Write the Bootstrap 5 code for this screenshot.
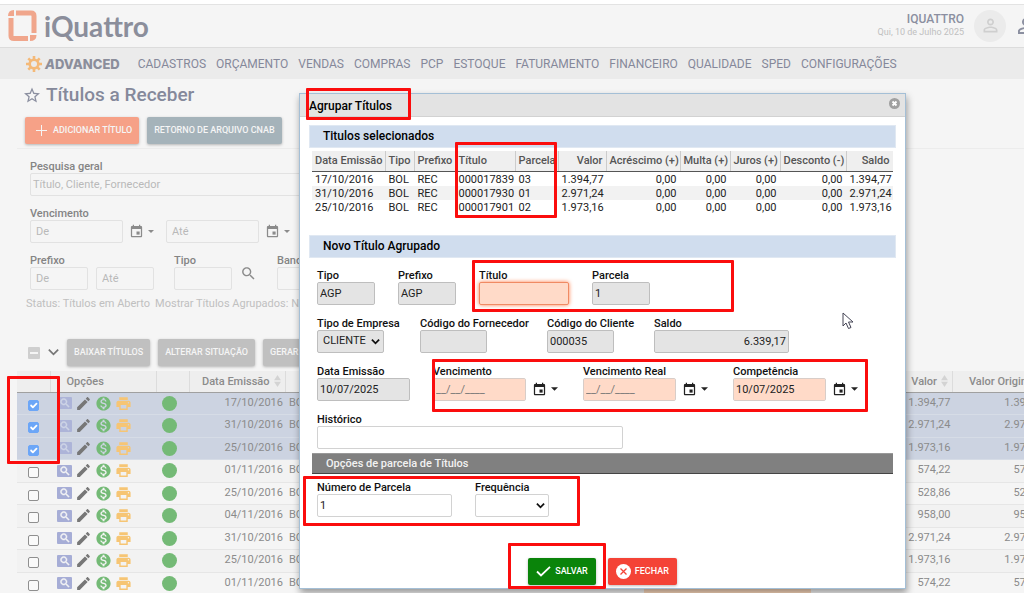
<!DOCTYPE html>
<html lang="pt-BR">
<head>
<meta charset="utf-8">
<meta name="viewport" content="width=device-width, initial-scale=1">
<title>iQuattro - Títulos a Receber</title>
<link href="https://cdn.jsdelivr.net/npm/bootstrap@5.3.0/dist/css/bootstrap.min.css" rel="stylesheet">
<style>
  body { font-family: Roboto, "Liberation Sans", sans-serif; font-size: 11px; line-height: 13px; color: #8b8b8b; background: #f5f5f5; }
  svg { fill: currentColor; flex: none; display: block; }
  input::placeholder { color: #b9b9b9 !important; opacity: 1; }

  /* header and menu */
  .topbar { height: 48px; border-top: 4px solid #fff; border-bottom: 1px solid #dcdcdc; box-shadow: inset 0 1px #e3e3e3; padding-left: 8px; margin-right: -14px; }
  .brand-name { font: 700 28px/32px Lato, sans-serif; color: #8b8e9b; margin-left: 7px; }
  .user-name { font-size: 12px; font-weight: 500; color: #8b8fa0; }
  .user-date { font-size: 9px; line-height: 12px; color: #c0c0c0; }
  .avatar { width: 32px; height: 32px; background: #ebebeb; color: #cfcfcf; margin: 0 8px 0 10px; }
  .menubar { height: 31px; background: #ebebeb; padding: 1px 0 0 26px; }
  .menu-links { gap: 10px; }
  .menubar a { color: #85889a; font-size: 12px; white-space: nowrap; }
  .edition { font: 800 13px/18px Inter, sans-serif; color: #8b8e9b; margin: 0 18px 0 3px; }

  /* page contents */
  .title-line { padding: 4px 0 0 24px; }
  .page-title { font-size: 19px; line-height: 24px; font-weight: 500; color: #85899b; margin-left: 6px; }
  .actions { padding: 10px 0 0 25px; }
  .act { border: 0; border-radius: 2px; height: 27px; padding: 0 7px; font-size: 9px; line-height: 13px; font-weight: 500; color: #f5f5f5; box-shadow: 0 1px 3px #00000044; white-space: nowrap; }
  .act:hover { color: #fff; }
  .act-new { background: #f6a187; padding-left: 11px; gap: 6px; } .act-file { background: #a5b3ba; } .act-off { background: #c0c0c0; }
  .act-save, .act-save:hover { background: #0a840a; color: #fff; } .act-close, .act-close:hover { background: #f44336; color: #fff; }
  .filters { border-top: 1px solid #ececec; margin: 4px 0 0 17px; padding: 11px 0 0 13px; }
  .filter-row { margin-top: 11px; }
  .field label { display: block; font-weight: 500; white-space: nowrap; height: 13px; }
  .filters label { color: #848484; }
  .field .form-control, .field .form-select { height: 23px; min-height: 0; padding: 0 5px; font-size: 11px; line-height: 20px; border: 1px solid #e2e2e2; border-radius: 2px; background-color: #f5f5f5; color: #8b8b8b; box-shadow: none; }
  .field .wide { max-width: 600px; padding-left: 2px; }
  .w58 { width: 58px !important; } .w67 { width: 67px !important; } .w74 { width: 74px !important; } .w90 { width: 90px !important; }
  .w93 { width: 93px !important; } .w135 { width: 135px !important; } .w306 { width: 306px !important; }
  .f80 { width: 80px; } .f84 { width: 84px; } .f104 { width: 104px; } .f127 { width: 127px; }
  .gap-date { column-gap: 6px; }
  .cal-btn { margin-right: 6px; }
  .icon-btn { border: 0; background: none; padding: 0; color: inherit; }
  .status { color: #c0c0c0; margin: 7px 0 0 26px; white-space: nowrap; gap: 5px; }

  /* title list */
  .bulk { margin: 29px 0 5px 28px; }
  .minus { width: 12px; height: 12px; background: #cfcfcf; border-radius: 1px; }
  .list-wrap { margin: 0 -31px 0 17px; }
  .titles { table-layout: fixed; width: 100%; border-collapse: collapse; }
  .titles th { height: 21px; font-weight: 500; background: #eee; border-bottom: 1px solid #a0a0a0; border-right: 1px solid #dcdcdc; padding: 0 4px; white-space: nowrap; }
  .titles td { height: 22px; border-bottom: 1px solid #e6e6e6; padding: 0 2px 2px 4px; white-space: nowrap; overflow: hidden; }
  .titles td.tools { padding: 0 3px; }
  .titles tr:nth-child(even) td { height: 23px; background: #f2f2f2; }
  .titles tr.picked td { background: #ccd3e1; border-color: #d6dce6; }
  .tools-set { gap: 3px; padding-left: 4px; }
  .titles .form-check-input { width: 11px; height: 11px; margin: 4px 0 0; border: 1px solid #8f8f8f; border-radius: 2px; background-color: #fafafa; display: block; }
  .titles .form-check-input:checked { background-color: #6ca6f7; border-color: #6ca6f7; background-size: 12px 12px; }
  .view { width: 15px; height: 12px; border-radius: 1px; background: #a6add6; color: #f5f5f5; }
  .view svg { stroke: currentColor; stroke-width: 1; }
  .picked .view { color: #d0d6e8; opacity: .8; }
  .dot { width: 15px; height: 15px; background: #74ba76; margin-left: 3px; }
  .notice { width: 167px; height: 4px; left: 644px; bottom: 0; background: #fbd9bd; }

  /* dialog */
  .dlg { left: 299px; top: 93px; width: 607px; background: #fff; border: 1px solid #a4bfd6; color: #222; box-shadow: 1px 4px 7px #00000060; }
  .dlg-head { height: 23px; background: #e3e3e3; border-bottom: 1px solid #d2d2d2; padding: 0 5px 0 9px; }
  .dlg-title { font-size: 12px; line-height: 25px; font-weight: 500; color: #000; }
  .band { margin: 8px 9px 0; height: 23px; padding: 0 13px; background: #d0ddee; border: 1px solid #e0e8f2; font-size: 12px; line-height: 21px; font-weight: 500; color: #000; }
  .band-next { margin-top: 21px; }
  .picks { width: calc(100% - 24px); margin: 3px 12px 0; table-layout: fixed; border-collapse: collapse; }
  .picks th { height: 20px; background: #efefef; font-weight: 500; color: #555; border-bottom: 1px solid #555; border-right: 1px solid #ccc; padding: 0 3px; white-space: nowrap; }
  .picks th:last-child { border-right: 0; }
  .picks td { padding: 1px 3px 0; line-height: 13px; border-right: 1px solid transparent; white-space: nowrap; }
  .picks tr:nth-child(even) td { background: #f2f2f2; }
  .dlg form { padding: 11px 17px 3px; }
  .dlg .form-row { gap: 23px; margin-bottom: 12px; }
  .dlg label { color: #111; }
  .dlg .field .form-control, .dlg .field .form-select { background-color: #fff; border-color: #d2d2d2; color: #222; padding: 0 2px; }
  .dlg .field .form-control:disabled, .dlg .field .form-select:disabled { background-color: #e4e4e4; border-color: #bebebe; opacity: 1; }
  .dlg .field .need { background-color: #ffdac8; border-color: #d8cdc8; }
  .dlg .field .need::placeholder { color: #777 !important; }
  .dlg .field .hot { border-color: #f08a63; box-shadow: 0 0 4px #ff7a45; }
  .dlg .field .form-select { background-image: url("data:image/svg+xml,%3csvg xmlns='http://www.w3.org/2000/svg' viewBox='0 0 10 10'%3e%3cpath d='M1 3l4 4 4-4' fill='none' stroke='%23111' stroke-width='2'/%3e%3c/svg%3e"); background-size: 9px 9px; background-position: right 3px center; padding-left: 5px; }
  .parcels { height: 21px; margin: -8px -5px 7px; padding: 0 14px; background: #808080; border-bottom: 1px solid #444; border-top: 1px solid #999; color: #f2f2f2; font-weight: 500; line-height: 19px; }
  .dlg-actions { gap: 12px; padding-top: 29px; }
  .dlg-actions .act { padding: 0 8px; }

  /* red highlights */
  .hl { position: absolute; border: 3px solid #fb0d0d; border-radius: 1px; pointer-events: none; }
  .hl-rows { left: 7px; top: 376px; width: 53px; height: 88px; }
  .hl-title { left: 6px; top: -6px; width: 105px; height: 32px; }
  .hl-ids { left: 155px; top: 48px; width: 102px; height: 76px; }
  .hl-new { left: 172px; top: 166px; width: 262px; height: 52px; }
  .hl-dates { left: 132px; top: 265px; width: 436px; height: 53px; }
  .hl-parcels { left: 3px; top: 382px; width: 277px; height: 50px; }
  .hl-save { left: 208px; top: 449px; width: 98px; height: 46px; }
  .pointer { left: 542px; top: 218px; }
</style>
</head>
<body>
<svg class="d-none">
  <symbol id="cal" viewBox="0 0 24 24"><path d="M19 3h-1V1h-2v2H8V1H6v2H5c-1.1 0-2 .9-2 2v14c0 1.1.9 2 2 2h14c1.1 0 2-.9 2-2V5c0-1.1-.9-2-2-2zM19 19H5V8h14z"/><path d="M12 12h5v5h-5z"/></symbol>
  <symbol id="pencil" viewBox="0 0 24 24"><path d="M3 17.250V21h3.750L17.810 9.940l-3.750-3.750zM20.710 7.040c.39-.39.39-1.020 0-1.410l-2.340-2.340c-.39-.39-1.020-.39-1.410 0l-1.830 1.830 3.750 3.750z"/></symbol>
  <symbol id="print" viewBox="0 0 24 24"><path d="M19 8H5c-1.660 0-3 1.340-3 3v6h4v4h12v-4h4v-6c0-1.660-1.340-3-3-3zm-3 11H8v-5h8v5zm3-7c-.55 0-1-.45-1-1s.45-1 1-1 1 .45 1 1-.45 1-1 1zm-1-9H6v4h12V3z"/></symbol>
  <symbol id="money" viewBox="0 0 24 24"><path d="M12 2C6.480 2 2 6.480 2 12s4.480 10 10 10 10-4.480 10-10S17.520 2 12 2zm1.410 16.090V20h-2.670v-1.930c-1.710-.36-3.160-1.460-3.270-3.400h1.960c.1 1.050.82 1.870 2.650 1.870 1.960 0 2.400-.98 2.400-1.590 0-.83-.44-1.610-2.670-2.140-2.480-.6-4.180-1.620-4.180-3.670 0-1.720 1.390-2.840 3.110-3.210V4h2.670v1.950c1.860.45 2.790 1.860 2.850 3.390H14.300c-.05-1.110-.64-1.870-2.220-1.870-1.500 0-2.400.68-2.400 1.640 0 .84.65 1.390 2.670 1.910s4.180 1.390 4.180 3.910c-.01 1.830-1.380 2.830-3.120 3.160z"/></symbol>
  <symbol id="search" viewBox="0 0 24 24"><path d="M15.500 14h-.79l-.28-.27C15.410 12.590 16 11.110 16 9.500 16 5.910 13.090 3 9.500 3S3 5.910 3 9.500 5.910 16 9.500 16c1.610 0 3.090-.59 4.230-1.570l.27.28v.79l5 4.990L20.490 19l-4.990-5zm-6 0C7.010 14 5 11.990 5 9.500S7.010 5 9.500 5 14 7.010 14 9.500 11.990 14 9.500 14z"/></symbol>
  <symbol id="person" viewBox="0 0 24 24"><path d="M12 5.900a2.100 2.100 0 1 1 0 4.200 2.100 2.100 0 0 1 0-4.200m0 9c2.970 0 6.100 1.460 6.100 2.100v1.100H5.900V17c0-.64 3.130-2.100 6.100-2.100M12 4C9.790 4 8 5.790 8 8s1.790 4 4 4 4-1.790 4-4-1.790-4-4-4zm0 9c-2.670 0-8 1.340-8 4v3h16v-3c0-2.660-5.330-4-8-4z"/></symbol>
  <symbol id="caret" viewBox="0 0 8 4"><path d="M0 0h8L4 4z"/></symbol>
  <symbol id="sort" viewBox="0 0 8 14"><path fill="#d3d3d3" d="M4 0l4 6H0zM0 8h8l-4 6z"/></symbol>
</svg>

<div class="vh-100 overflow-hidden position-relative">
  <header class="topbar d-flex align-items-center">
    <svg width="29" height="31" viewBox="0 0 29 31"><g fill="none" stroke="#f0a68c" stroke-width="5"><path d="M8 3h15q3 0 3 3v17"/><path d="M3 8v18q0 2.500 3 2.500h14"/></g><path fill="#f0a68c" d="M0 6q0-6 6-6v6zM22 25h6.500q0 6-6.500 6z"/></svg>
    <span class="brand-name">iQuattro</span>
    <div class="ms-auto text-end"><div class="user-name">IQUATTRO</div><div class="user-date">Qui, 10 de Julho 2025</div></div>
    <div class="avatar rounded-circle d-flex align-items-center justify-content-center"><svg width="21" height="21"><use href="#person"/></svg></div>
    <svg width="24" height="24" color="#8b8fa0"><use href="#person"/></svg>
  </header>
  <nav class="menubar d-flex align-items-center">
    <svg width="16" height="16" viewBox="-8 -8 16 16"><circle r="4.300" fill="none" stroke="#f4b978" stroke-width="2.600"/><g stroke="#f4b978" stroke-width="2.600"><path d="M0-8v3M0 8V5M-8 0h3M8 0H5M-5.700-5.700l2 2M5.700 5.700l-2-2M-5.700 5.700l2-2M5.700-5.700l-2 2"/></g></svg>
    <span class="edition"><i>A</i>DVANCED</span>
    <div class="menu-links d-flex">
      <a href="#" class="text-decoration-none">CADASTROS</a><a href="#" class="text-decoration-none">ORÇAMENTO</a><a href="#" class="text-decoration-none">VENDAS</a><a href="#" class="text-decoration-none">COMPRAS</a><a href="#" class="text-decoration-none">PCP</a><a href="#" class="text-decoration-none">ESTOQUE</a><a href="#" class="text-decoration-none">FATURAMENTO</a><a href="#" class="text-decoration-none">FINANCEIRO</a><a href="#" class="text-decoration-none">QUALIDADE</a><a href="#" class="text-decoration-none">SPED</a><a href="#" class="text-decoration-none">CONFIGURAÇÕES</a>
    </div>
  </nav>

  <main>
    <div class="title-line d-flex align-items-center">
      <svg width="16" height="16" viewBox="2 2 20 19" color="#8b8fa0"><path d="M22 9.240l-7.190-.62L12 2 9.190 8.630 2 9.240l5.460 4.730L5.820 21 12 17.270 18.180 21l-1.630-7.030zM12 15.400l-3.760 2.270 1-4.280-3.320-2.880 4.380-.38L12 6.100l1.710 4.040 4.380.38-3.320 2.880 1 4.280z"/></svg>
      <h1 class="page-title mb-0">Títulos a Receber</h1>
    </div>
    <div class="actions d-flex gap-2">
      <button class="btn act act-new d-flex align-items-center"><svg width="11" height="11" viewBox="0 0 11 11"><path d="M5 0h1v5h5v1H6v5H5V6H0V5h5z"/></svg>ADICIONAR TÍTULO</button>
      <button class="btn act act-file">RETORNO DE ARQUIVO CNAB</button>
    </div>
    <form class="filters">
      <div class="field"><label for="q">Pesquisa geral</label><input id="q" class="form-control wide" placeholder="Título, Cliente, Fornecedor"></div>
      <div class="field filter-row"><label for="v1">Vencimento</label>
        <div class="d-flex align-items-center gap-date">
          <input id="v1" class="form-control w93" placeholder="De"><button type="button" class="icon-btn cal-btn d-flex align-items-center gap-1" aria-label="Calendário"><svg width="15" height="15"><use href="#cal"/></svg><svg width="6" height="3"><use href="#caret"/></svg></button>
          <input class="form-control w93" placeholder="Até" aria-label="Vencimento até"><button type="button" class="icon-btn cal-btn d-flex align-items-center gap-1" aria-label="Calendário"><svg width="15" height="15"><use href="#cal"/></svg><svg width="6" height="3"><use href="#caret"/></svg></button>
        </div>
      </div>
      <div class="d-flex filter-row align-items-end">
        <div class="field me-2"><label for="p1">Prefixo</label><input id="p1" class="form-control w58" placeholder="De"></div>
        <div class="field me-3 pe-1"><input class="form-control w58" placeholder="Até" aria-label="Prefixo até"></div>
        <div class="field"><label for="t1">Tipo</label><input id="t1" class="form-control w58"></div>
        <button type="button" class="icon-btn mx-2 pb-2" aria-label="Buscar"><svg width="17" height="17"><use href="#search"/></svg></button>
        <div class="field ms-2 ps-1"><label for="b1">Banco</label><input id="b1" class="form-control w58"></div>
      </div>
    </form>
    <div class="status d-flex"><span>Status: Títulos em Aberto</span><span>Mostrar Títulos Agrupados: NÃO</span></div>

    <div class="bulk d-flex align-items-center gap-2">
      <span class="minus d-flex align-items-center justify-content-center"><svg width="8" height="2"><path fill="#f5f5f5" d="M0 0h8v2H0z"/></svg></span>
      <svg width="11" height="7" viewBox="0 0 9 6"><path d="M.5.5l4 4 4-4" fill="none" stroke="#777" stroke-width="1.500"/></svg>
      <button class="btn act act-off">BAIXAR TÍTULOS</button><button class="btn act act-off">ALTERAR SITUAÇÃO</button><button class="btn act act-off">GERAR BOLETO</button>
    </div>
    <div class="list-wrap">
      <table class="titles">
        <colgroup><col style="width:33px"><col style="width:106px"><col style="width:33px"><col style="width:96px"><col><col style="width:80px"><col style="width:102px"></colgroup>
        <thead><tr><th></th><th class="ps-3">Opções</th><th></th><th><span class="d-flex justify-content-end align-items-center gap-1">Data Emissão <svg width="7" height="12"><use href="#sort"/></svg></span></th><th></th><th><span class="d-flex justify-content-end align-items-center gap-1">Valor <svg width="7" height="12"><use href="#sort"/></svg></span></th><th><span class="d-flex align-items-center gap-1 ms-2 ps-1">Valor Original <svg width="7" height="12"><use href="#sort"/></svg></span></th></tr></thead>
        <tbody id="rows"></tbody>
      </table>
    </div>
  </main>
  <div class="notice position-absolute"></div>
  <div class="hl hl-rows"></div>

  <section class="dlg position-absolute" role="dialog" aria-labelledby="dt">
    <div class="dlg-head d-flex justify-content-between">
      <h2 class="dlg-title mb-0" id="dt">Agrupar Títulos</h2>
      <button class="icon-btn align-self-start mt-1" aria-label="Fechar janela"><svg width="11" height="11" viewBox="0 0 11 11"><circle cx="5.500" cy="5.500" r="5.500" fill="#a0a0a0"/><path d="M3.500 3.500l4 4m0-4l-4 4" stroke="#fff" stroke-width="1.800"/></svg></button>
    </div>
    <h3 class="band mb-0">Titulos selecionados</h3>
    <table class="picks">
      <colgroup><col style="width:73px"><col style="width:29px"><col style="width:41px"><col style="width:60px"><col style="width:43px"><col style="width:48px"><col style="width:74px"><col style="width:50px"><col style="width:50px"><col style="width:66px"><col></colgroup>
      <thead><tr><th>Data Emissão</th><th>Tipo</th><th>Prefixo</th><th>Título</th><th>Parcela</th><th class="text-end">Valor</th><th class="text-end">Acréscimo (+)</th><th class="text-end">Multa (+)</th><th class="text-end">Juros (+)</th><th class="text-end">Desconto (-)</th><th class="text-end">Saldo</th></tr></thead>
      <tbody>
        <tr><td>17/10/2016</td><td>BOL</td><td>REC</td><td>000017839</td><td>03</td><td class="text-end">1.394,77</td><td class="text-end">0,00</td><td class="text-end">0,00</td><td class="text-end">0,00</td><td class="text-end">0,00</td><td class="text-end">1.394,77</td></tr>
        <tr><td>31/10/2016</td><td>BOL</td><td>REC</td><td>000017930</td><td>01</td><td class="text-end">2.971,24</td><td class="text-end">0,00</td><td class="text-end">0,00</td><td class="text-end">0,00</td><td class="text-end">0,00</td><td class="text-end">2.971,24</td></tr>
        <tr><td>25/10/2016</td><td>BOL</td><td>REC</td><td>000017901</td><td>02</td><td class="text-end">1.973,16</td><td class="text-end">0,00</td><td class="text-end">0,00</td><td class="text-end">0,00</td><td class="text-end">0,00</td><td class="text-end">1.973,16</td></tr>
      </tbody>
    </table>
    <h3 class="band band-next mb-0">Novo Título Agrupado</h3>
    <form>
      <div class="form-row d-flex">
        <div class="field"><label for="f1">Tipo</label><input id="f1" class="form-control w58" value="AGP" disabled></div>
        <div class="field"><label for="f2">Prefixo</label><input id="f2" class="form-control w58" value="AGP" disabled></div>
        <div class="field"><label for="f3">Título</label><input id="f3" class="form-control w90 need hot"></div>
        <div class="field"><label for="f4">Parcela</label><input id="f4" class="form-control w58" value="1" disabled></div>
      </div>
      <div class="form-row d-flex">
        <div class="field f80"><label for="f5">Tipo de Empresa</label><select id="f5" class="form-select w67" disabled><option>CLIENTE</option></select></div>
        <div class="field f104"><label for="f6">Código do Fornecedor</label><input id="f6" class="form-control w67" disabled></div>
        <div class="field f84"><label for="f7">Código do Cliente</label><input id="f7" class="form-control w67" value="000035" disabled></div>
        <div class="field"><label for="f8">Saldo</label><input id="f8" class="form-control w135 text-end" value="6.339,17" disabled></div>
      </div>
      <div class="form-row d-flex">
        <div class="field"><label for="f9">Data Emissão</label><input id="f9" class="form-control w93" value="10/07/2025" disabled></div>
        <div class="field f127"><label for="f10">Vencimento</label><div class="d-flex align-items-center gap-date"><input id="f10" class="form-control w93 need" placeholder="__/__/____"><button type="button" class="icon-btn d-flex align-items-center gap-1" aria-label="Calendário"><svg width="15" height="15"><use href="#cal"/></svg><svg width="7" height="4"><use href="#caret"/></svg></button></div></div>
        <div class="field f127"><label for="f11">Vencimento Real</label><div class="d-flex align-items-center gap-date"><input id="f11" class="form-control w93 need" placeholder="__/__/____"><button type="button" class="icon-btn d-flex align-items-center gap-1" aria-label="Calendário"><svg width="15" height="15"><use href="#cal"/></svg><svg width="7" height="4"><use href="#caret"/></svg></button></div></div>
        <div class="field f127"><label for="f12">Competência</label><div class="d-flex align-items-center gap-date"><input id="f12" class="form-control w93 need" value="10/07/2025"><button type="button" class="icon-btn d-flex align-items-center gap-1" aria-label="Calendário"><svg width="15" height="15"><use href="#cal"/></svg><svg width="7" height="4"><use href="#caret"/></svg></button></div></div>
      </div>
      <div class="form-row d-flex">
        <div class="field"><label for="f13">Histórico</label><input id="f13" class="form-control w306"></div>
      </div>
      <div class="parcels">Opções de parcela de Títulos</div>
      <div class="form-row d-flex">
        <div class="field"><label for="f14">Número de Parcela</label><input id="f14" class="form-control w135" value="1"></div>
        <div class="field"><label for="f15">Frequência</label><select id="f15" class="form-select w74"><option></option></select></div>
      </div>
      <div class="dlg-actions d-flex justify-content-center">
        <button type="submit" class="btn act act-save d-flex align-items-center gap-1"><svg width="15" height="11" viewBox="0 0 15 11"><path d="M1 5.500l4 4L14 .8" fill="none" stroke="#fff" stroke-width="1.800"/></svg>SALVAR</button>
        <button type="button" class="btn act act-close d-flex align-items-center gap-1"><svg width="15" height="15" viewBox="0 0 15 15"><circle cx="7.500" cy="7.500" r="7.500" fill="#fff"/><path d="M4.500 4.500l6 6m0-6l-6 6" stroke="#f44336" stroke-width="1.300"/></svg>FECHAR</button>
      </div>
    </form>
    <div class="hl hl-title"></div><div class="hl hl-ids"></div><div class="hl hl-new"></div><div class="hl hl-dates"></div><div class="hl hl-parcels"></div><div class="hl hl-save"></div>
    <svg class="pointer position-absolute" width="13" height="18" viewBox="0 0 13 18"><path d="M1 1v13l3-3 2.500 5.500 2.500-1L6.500 10H11z" fill="#fff" stroke="#445" stroke-width="1"/></svg>
  </section>
</div>

<script src="https://cdn.jsdelivr.net/npm/bootstrap@5.3.0/dist/js/bootstrap.bundle.min.js"></script>
<script>
  const data = [['17/10/2016','1.394,77',1],['31/10/2016','2.971,24',1],['25/10/2016','1.973,16',1],['01/11/2016','574,22'],['25/10/2016','528,86'],['04/11/2016','958,00'],['31/10/2016','2.971,24'],['25/10/2016','1.973,16'],['01/11/2016','574,22']];
  const icon = (id, color, size) => `<svg width="${size}" height="${size}" color="${color}"><use href="#${id}"/></svg>`;
  document.getElementById('rows').innerHTML = data.map(([d, v, on]) => `<tr class="${on ? 'picked' : ''}">
    <td class="tools"><input type="checkbox" class="form-check-input mx-auto" aria-label="Selecionar ${d}" ${on ? 'checked' : ''}></td>
    <td class="tools"><div class="tools-set d-flex align-items-center"><span class="view d-flex align-items-center justify-content-center">${icon('search', 'inherit', 12)}</span>${icon('pencil', '#777', 17)}${icon('money', '#74ba76', 17)}${icon('print', '#f6c574', 17)}</div></td>
    <td class="tools"><div class="dot rounded-circle"></div></td>
    <td class="text-end">${d}</td><td>BOL</td><td class="text-end">${v}</td><td class="text-end pe-2">${v}</td></tr>`).join('');
</script>
</body>
</html>
